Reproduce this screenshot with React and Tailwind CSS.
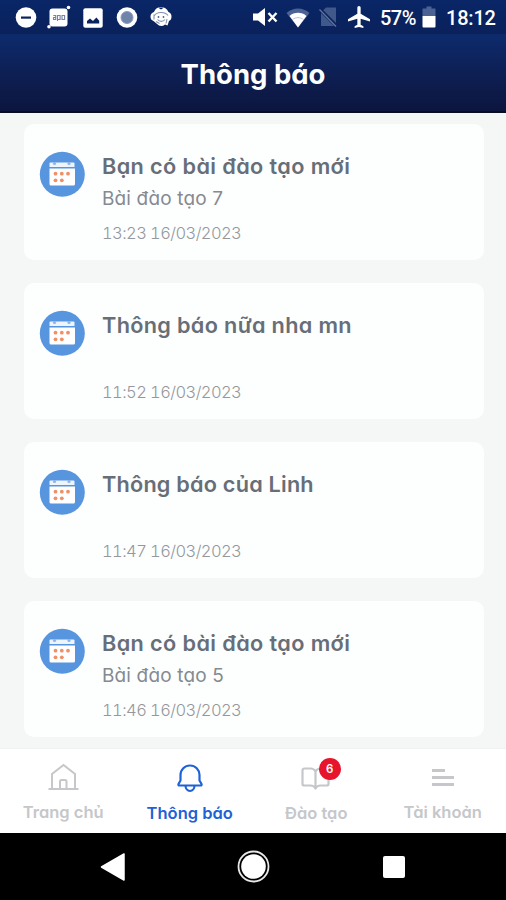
const notifications = [
  { id: 1, title: 'Bạn có bài đào tạo mới', body: 'Bài đào tạo 7', time: '13:23 16/03/2023', titleClass: 'tracking-[0.38px]' },
  { id: 2, title: 'Thông báo nữa nha mn', body: '', time: '11:52 16/03/2023', titleClass: 'tracking-[0.32px]' },
  { id: 3, title: 'Thông báo của Linh', body: '', time: '11:47 16/03/2023', titleClass: 'tracking-[0.2px]' },
  { id: 4, title: 'Bạn có bài đào tạo mới', body: 'Bài đào tạo 5', time: '11:46 16/03/2023', titleClass: 'tracking-[0.38px]' },
]

function StatusBar() {
  return (
    <div className="flex h-[34px] shrink-0 items-center bg-linear-to-b from-[#092667] to-[#0a215b] pl-[15px] pr-[11px] text-white">
      {/* Notification icons */}
      <svg className="mt-px h-[22px] w-[22px] shrink-0" viewBox="0 0 22 22">
        <circle cx="11" cy="10.5" r="10.3" fill="white" />
        <rect x="6" y="9.5" width="10" height="2.2" fill="#0a235f" />
      </svg>
      <svg className="ml-[10px] h-[24px] w-[24px] shrink-0" viewBox="0 0 24 24">
        <rect x="2.5" y="3.500" width="18" height="18" rx="3" fill="white" />
        <circle cx="21.5" cy="2.5" r="1.8" fill="white" />
        <circle cx="2" cy="21.7" r="1.8" fill="white" />
        <path d="M6.3 10.5h2.400v4H6.500v-2h2M10.500 16v-5.500h2.600v4h-2.600M15 10.500h2.600v4H15z" fill="none" stroke="#7682a3" strokeWidth="1.1" />
      </svg>
      <svg className="ml-[12px] mt-px h-[20px] w-[20px] shrink-0" viewBox="0 0 20 20">
        <rect x="0.3" y="0.3" width="19.4" height="19.4" rx="2" fill="white" />
        <path d="M4 15.500v-2.400l3-2.600 3 2.600 3.400-3.600 2.800 3.200v2.800z" fill="#0a235f" />
      </svg>
      <svg className="ml-[13px] mt-px h-[22px] w-[22px] shrink-0" viewBox="0 0 22 22">
        <circle cx="11" cy="10.5" r="10.3" fill="white" />
        <circle cx="11" cy="10.5" r="6" fill="#6f83ab" stroke="#8a9abc" />
      </svg>
      <svg className="ml-[11px] h-[22px] w-[24px] shrink-0" viewBox="0 0 24 22">
        <path d="M5 6Q7 1 12 1t7.500 5q3 1 3 4.500T20 15l-1.500 4.500-2.500-1Q12 22 7.500 17.500L4.500 15Q1.500 14 1.500 10.500T5 6z" fill="white" />
        <path d="M9 1.500l3 2 3-2z" fill="#0a235f" />
        <path d="M5.500 9.500c2-3.500 10-4.500 13.500 0M5 8.500v5M8.500 13.500c2 2.500 5.500 2.500 7.500 0M7 15.500l3.500 2M18 13l-1 4.500" fill="none" stroke="#8390b3" strokeWidth="1.1" />
        <circle cx="9.500" cy="11" r="0.9" fill="#4d6090" />
        <circle cx="14.500" cy="11" r="0.9" fill="#4d6090" />
      </svg>

      {/* System icons */}
      <svg className="ml-auto h-[22px] w-[26px] shrink-0" viewBox="0 0 26 22">
        <path d="M0 7.500h5L12 2v18l-7-5.500H0z" fill="white" />
        <path d="M15.500 7l8 8.500M23.500 7l-8 8.500" stroke="white" strokeWidth="2.4" />
      </svg>
      <svg className="ml-[7px] mt-px h-[20px] w-[24px] shrink-0" viewBox="0 0 24 20">
        <path d="M0.500 5C7-1 17-1 23.500 5L12 19.500z" fill="#4b6293" />
        <path d="M3.500 8C8 3.800 16 3.800 20.500 8L12 19.500z" fill="white" />
        <path d="M6.500 11.500c3.500-2.500 7.500-2.500 11 0" fill="none" stroke="#9ca9c6" strokeWidth="0.7" />
      </svg>
      <svg className="ml-[9px] h-[20px] w-[19px] shrink-0" viewBox="0 0 19 20">
        <path d="M7 0.500h10V19H2V5.500z" fill="#41588b" />
        <path d="M0.500 2L18 19.500" stroke="#0a235f" strokeWidth="3.5" />
        <path d="M0.500 2.500L17 19.500" stroke="#6175a2" strokeWidth="1.3" />
      </svg>
      <svg className="ml-[10px] h-[22px] w-[22px] shrink-0" viewBox="2 2 20 20">
        <path d="M22 16v-2l-8.500-5V3.500c0-.83-.67-1.500-1.500-1.500s-1.500.67-1.500 1.500V9L2 14v2l8.500-2.500V19L8 20.500V22l4-1 4 1v-1.500L13.500 19v-5.500L22 16z" fill="white" />
      </svg>
      <span className="ml-[10px] mt-[2px] w-[37px] whitespace-nowrap font-['Roboto','Liberation_Sans',sans-serif] text-[20px] font-medium leading-none tracking-[-0.5px]">
        57%
      </span>
      <svg className="ml-[5px] h-[22px] w-[14px] shrink-0" viewBox="0 0 14 22">
        <path d="M4.500 0.500h5v2H13q.5 0 .5.500v7H.5V3q0-.5.5-.5h3.500z" fill="#4b6293" />
        <path d="M0.500 10h13v10.500q0 1-1 1h-11q-1 0-1-1z" fill="white" />
      </svg>
      <span className="ml-[10px] mt-[2px] w-[49px] whitespace-nowrap font-['Roboto','Liberation_Sans',sans-serif] text-[20px] font-medium leading-none tracking-[-0.2px]">
        18:12
      </span>
    </div>
  )
}

function CalendarIcon() {
  return (
    <svg className="h-[46px] w-[46px] shrink-0" viewBox="0 0 46 46">
      <circle cx="23.300" cy="23.300" r="22.500" fill="#5795df" />
      <path d="M10.500 12.500q0-1 1-1h23q1 0 1 1V16h-25z" fill="#eef4fc" />
      <circle cx="15.500" cy="12.500" r="1.6" fill="#8db5e8" />
      <circle cx="30" cy="12.500" r="1.6" fill="#8db5e8" />
      <path d="M10.500 17.500h25.500v15.500q0 1.500-1.500 1.500h-22.500q-1.500 0-1.500-1.500z" fill="white" />
      {[16.5, 22.8, 29].map((x) => (
        <circle key={x} cx={x} cy="22.7" r="1.9" fill="#f09068" />
      ))}
      {[16.5, 22.8].map((x) => (
        <circle key={x} cx={x} cy="29.3" r="1.9" fill="#f09068" />
      ))}
    </svg>
  )
}

function NotificationCard({ item }) {
  return (
    <div className="flex h-[136px] shrink-0 gap-[17px] rounded-[10px] bg-[#fdfefe] pl-[15px] pt-[27px]">
      <CalendarIcon />
      <div className="-mt-px whitespace-nowrap">
        <div className={`h-[32px] text-[21.7px] font-semibold leading-[32px] text-[#676e78] ${item.titleClass}`}>
          {item.title}
        </div>
        <div className="h-[32px] text-[19px] leading-[34px] tracking-[0.15px] text-[#858a91]">{item.body}</div>
        <div className="mt-[5px] text-[16.5px] font-light leading-[28px] tracking-[-0.58px] text-[#94989d] tabular-nums">
          {item.time}
        </div>
      </div>
    </div>
  )
}

function TabBar() {
  return (
    <div className="grid h-[85px] shrink-0 grid-cols-4 border-t border-[#f0f2f2] bg-white text-center text-[16.5px] font-semibold leading-[24px] text-[#c5c7ca]">
      <div className="flex flex-col items-center pt-[13px]">
        <svg className="h-[30px] w-[32px]" viewBox="0 0 32 30" fill="none" stroke="currentColor" strokeWidth="2">
          <path d="M1.500 27h30M5 27V12L16.500 3 28 12v15M13 27v-7.500q0-1.500 1.500-1.500H18q1.500 0 1.500 1.500V27" />
        </svg>
        <span className="mt-[8px] whitespace-nowrap">Trang chủ</span>
      </div>
      <div className="flex flex-col items-center pt-[14px] text-[#1d62d8]">
        <svg className="h-[30px] w-[28px]" viewBox="0 0 28 30" fill="none" stroke="currentColor" strokeWidth="2.2">
          <path d="M4.500 17.500V12a9.500 9.500 0 0 1 19 0v5.500l2 3.500q.5 1.500-1 1.500h-21q-1.500 0-1-1.500z" strokeLinejoin="round" />
          <path d="M9.500 22.500a4.500 5.500 0 0 0 9 0" />
        </svg>
        <span className="mt-[8px] whitespace-nowrap">Thông báo</span>
      </div>
      <div className="flex flex-col items-center pt-[14px]">
        <div className="relative">
          <svg className="h-[30px] w-[30px]" viewBox="0 0 30 30" fill="none" stroke="currentColor" strokeWidth="2.2" strokeLinejoin="round">
            <path d="M14.500 8.500q-1.500-3-5-3h-6q-2 0-2 2v13.500q0 1.500 2 1.500h6q3.500 0 5 3 1.500-3 5-3h6q2 0 2-1.500V7.500q0-2-2-2h-6q-3.500 0-5 3v17" />
          </svg>
          <span className="absolute left-[17.5px] top-[-5px] h-[22px] w-[22px] rounded-full bg-[#e7142c] text-[11.5px] leading-[22px] text-white">
            6
          </span>
        </div>
        <span className="mt-[8px] whitespace-nowrap">Đào tạo</span>
      </div>
      <div className="flex flex-col items-center pt-[13px]">
        <svg className="h-[30px] w-[22px]" viewBox="0 0 22 30" fill="none" stroke="currentColor" strokeWidth="2.8">
          <path d="M0 8.500h13M0 15.500h22M0 22.500h22" />
        </svg>
        <span className="mt-[8px] whitespace-nowrap">Tài khoản</span>
      </div>
    </div>
  )
}

function AndroidNav() {
  return (
    <div className="flex h-[67px] shrink-0 items-center bg-black pl-[100px]">
      <svg className="h-[30px] w-[26px]" viewBox="0 0 26 30">
        <path d="M1.500 15L24 2v26z" fill="white" stroke="white" strokeWidth="1.5" strokeLinejoin="round" />
      </svg>
      <svg className="ml-[111px] h-[33px] w-[33px]" viewBox="0 0 33 33">
        <circle cx="16.500" cy="16.500" r="15" fill="none" stroke="#e8e8e8" strokeWidth="1.8" />
        <circle cx="16.500" cy="16.500" r="12.3" fill="white" />
      </svg>
      <div className="ml-[113px] h-[22px] w-[22px] rounded-[2px] bg-white" />
    </div>
  )
}

export default function App() {
  return (
    <div className="flex h-[900px] w-[506px] flex-col overflow-hidden bg-[#f5f7f7] font-['Inter','Noto_Sans',sans-serif] [font-feature-settings:'cv11']">
      <StatusBar />
      <header className="flex h-[79px] shrink-0 items-center justify-center border-b-2 border-[#080d20] bg-linear-to-b from-[#0d2b6c] to-[#0c153e] pt-[4px]">
        <h1 className="text-[27.5px] font-bold leading-none text-white">Thông báo</h1>
      </header>

      <main className="flex min-h-0 flex-1 flex-col gap-[23px] pl-[24px] pr-[22px] pt-[11px]">
        {notifications.map((item) => (
          <NotificationCard key={item.id} item={item} />
        ))}
      </main>

      <TabBar />
      <AndroidNav />
    </div>
  )
}
